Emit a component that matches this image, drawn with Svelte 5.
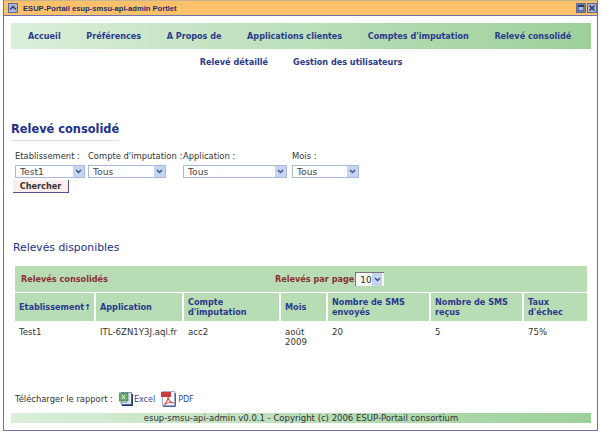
<script>
	const tabs = ['Accueil', 'Préférences', 'A Propos de', 'Applications clientes', "Comptes d'imputation", 'Relevé consolidé'];
	const filters = [
		{ label: 'Etablissement :', value: 'Test1', cls: 'f1' },
		{ label: "Compte d'imputation :", value: 'Tous', cls: 'f2' },
		{ label: 'Application :', value: 'Tous', cls: 'f3' },
		{ label: 'Mois :', value: 'Tous', cls: 'f4' }
	];
	const columns = [
		{ title: 'Etablissement↑', cls: 'c1' },
		{ title: 'Application', cls: 'c2' },
		{ title: "Compte d'imputation", cls: 'c3' },
		{ title: 'Mois', cls: 'c4' },
		{ title: 'Nombre de SMS envoyés', cls: 'c5' },
		{ title: 'Nombre de SMS reçus', cls: 'c6' },
		{ title: "Taux d'échec", cls: 'c7' }
	];
	const row = ['Test1', 'ITL-6ZN1Y3J.aql.fr', 'acc2', 'août 2009', '20', '5', '75%'];
</script>

<div class="window">
	<div class="titlebar">
		<span class="btn up">
			<svg width="8" height="8" viewBox="0 0 8 8"><path d="M1 5.5 L4 2.5 L7 5.5" fill="none" stroke="#2c3a70" stroke-width="1.4"/></svg>
		</span>
		<span class="title">ESUP-Portail esup-smsu-api-admin Portlet</span>
		<span class="spacer"></span>
		<span class="btn">
			<svg width="8" height="8" viewBox="0 0 8 8"><rect x="1" y="1" width="6" height="6" fill="none" stroke="#2c3a70"/><rect x="1" y="1" width="6" height="2" fill="#2c3a70"/></svg>
		</span>
		<span class="btn">
			<svg width="8" height="8" viewBox="0 0 8 8"><path d="M1.5 1.5 L6.5 6.5 M6.5 1.5 L1.5 6.5" stroke="#2c3a70" stroke-width="1.6"/></svg>
		</span>
	</div>

	<div class="content">
		<div class="nav">
			{#each tabs as tab}
				<span>{tab}</span>
			{/each}
		</div>
		<div class="subnav">
			<span>Relevé détaillé</span>
			<span>Gestion des utilisateurs</span>
		</div>

		<h2 class="heading">Relevé consolidé</h2>

		<div class="filters">
			{#each filters as f}
				<div class="filter {f.cls}">
					<div class="label">{f.label}</div>
					<div class="select">
						<span>{f.value}</span>
						<span class="arrow">
							<svg width="7" height="5" viewBox="0 0 7 5"><path d="M1 1 L3.5 3.5 L6 1" fill="none" stroke="#3a4f8c" stroke-width="1.4"/></svg>
						</span>
					</div>
				</div>
			{/each}
		</div>
		<button class="search">Chercher</button>

		<h3 class="subheading">Relevés disponibles</h3>

		<div class="report">
			<div class="toolbar">
				<span class="t-left">Relevés consolidés</span>
				<span class="t-right">Relevés par page</span>
				<div class="perpage">
					<span>10</span>
					<span class="arrow">
						<svg width="7" height="5" viewBox="0 0 7 5"><path d="M1 1 L3.5 3.5 L6 1" fill="none" stroke="#3a4f8c" stroke-width="1.4"/></svg>
					</span>
				</div>
			</div>
			<div class="grid">
				{#each columns as col}
					<div class="th {col.cls}">{col.title}</div>
				{/each}
				{#each row as cell, i}
					<div class="td" class:nowrap={i === 1}>{cell}</div>
				{/each}
			</div>
		</div>

		<div class="download">
			<span class="dl-label">Télécharger le rapport :</span>
			<svg class="icon excel" width="14" height="14" viewBox="0 0 14 14">
				<rect x="2.5" y="0.5" width="10" height="12" fill="#dfe6f2" stroke="#7f93bd"/>
				<rect x="0" y="1" width="9" height="8" fill="#6aa86a" stroke="#3c7a48" stroke-width="0.6"/>
				<path d="M3 3 L6 7 M6 3 L3 7" stroke="#e6f3e6" stroke-width="1"/>
				<path d="M1 10.5 H8" stroke="#9fb0cf"/>
				<path d="M3 13.2 H13.3 V2" fill="none" stroke="#1f3570" stroke-width="1.4"/>
			</svg>
			<span class="link">Excel</span>
			<svg class="icon pdf" width="15" height="16" viewBox="0 0 15 16">
				<rect x="1.5" y="0.5" width="12" height="14" fill="#fff" stroke="#a8b2cc"/>
				<rect x="0" y="1" width="10" height="5" fill="#d0383f"/>
				<path d="M7 6 C7 10 5 12 3 14 M7 6 C8 10 10 12 13 12 M3 14 C6 11 9 11 13 12" fill="none" stroke="#d8504f" stroke-width="1.1"/>
				<path d="M2 15.4 H14.4 V2" fill="none" stroke="#3a4f8c" stroke-width="1"/>
			</svg>
			<span class="link">PDF</span>
		</div>

		<div class="footer">esup-smsu-api-admin v0.0.1 - Copyright (c) 2006 ESUP-Portail consortium</div>
	</div>
</div>

<style>
	:global(body)
	{
		margin: 0;
		background: #fff;
	}

	.window
	{
		width: 595px;
		height: 431px;
		box-sizing: border-box;
		margin-left: 3px;
		border-left: 1px solid #6d6fae;
		border-right: 1px solid #6d6fae;
		border-bottom: 1px solid #6d6fae;
		font-family: "DejaVu Sans", sans-serif;
		font-size: 8.4px;
		color: #333;
	}

	.titlebar
	{
		display: flex;
		align-items: center;
		height: 14px;
		padding: 0 0 0 3px;
		background: #fdc06b;
		border-top: 1px solid #c8b48c;
		border-bottom: 1px solid #6d6fae;
	}

	.title
	{
		margin-left: 5px;
		font-family: "Liberation Sans", sans-serif;
		font-weight: bold;
		font-size: 7.6px;
		color: #23306e;
	}

	.spacer
	{
		flex: 1;
	}

	.btn
	{
		display: flex;
		align-items: center;
		justify-content: center;
		box-sizing: border-box;
		width: 10px;
		height: 10px;
		margin-left: 1px;
		background: #a9b5d3;
		border: 1px solid #5c6a96;
	}

	.content
	{
		padding: 7px 6px 0 7px;
	}

	.nav
	{
		display: flex;
		gap: 25.6px;
		align-items: center;
		height: 26px;
		padding-left: 17px;
		background: linear-gradient(to right, #daeeda, #9cd09a);
		font-weight: bold;
		font-size: 8.1px;
		color: #2a3a8c;
	}

	.subnav
	{
		display: flex;
		justify-content: center;
		gap: 25px;
		margin-top: 8px;
		font-weight: bold;
		font-size: 8.15px;
		color: #2a3a8c;
	}

	.heading
	{
		display: inline-block;
		margin: 55px 0 0;
		padding-bottom: 3px;
		border-bottom: 1px solid #dfe0f2;
		font-size: 11.4px;
		line-height: 15px;
		color: #23308a;
	}

	.filters
	{
		display: flex;
		margin: 9px 0 0 4px;
	}

	.filter
	{
		flex: none;
	}

	.f1 { width: 73px; }
	.f2 { width: 95px; }
	.f3 { width: 109px; }
	.f4 { width: 67px; }

	.label
	{
		height: 13px;
		line-height: 13px;
		white-space: nowrap;
	}

	.select
	{
		display: flex;
		justify-content: space-between;
		align-items: center;
		box-sizing: border-box;
		height: 13px;
		margin-top: 2px;
		padding-left: 4px;
		border: 1px solid #a9bbd8;
		font-size: 9.2px;
		color: #444;
	}

	.f1 .select { width: 70px; }
	.f2 .select { width: 78px; }
	.f3 .select { width: 104px; }
	.f4 .select { width: 67px; }

	.arrow
	{
		display: flex;
		align-items: center;
		justify-content: center;
		width: 11px;
		height: 100%;
		background: #c6d4f2;
	}

	.search
	{
		display: block;
		height: 13px;
		width: 56px;
		margin: 2px 0 0 2px;
		padding: 0;
		background: #fdeeee;
		border: none;
		border-bottom: 1px solid #4a5490;
		border-right: 1px solid #4a5490;
		font-family: inherit;
		font-weight: bold;
		font-size: 8.2px;
		line-height: 11px;
		color: #333;
	}

	.subheading
	{
		margin: 47px 0 0 2px;
		font-size: 10.8px;
		font-weight: normal;
		line-height: 15px;
		color: #23308a;
	}

	.report
	{
		width: 572px;
		margin: 11px 0 0 4px;
	}

	.toolbar
	{
		display: flex;
		align-items: center;
		height: 26px;
		padding-left: 6px;
		background: #b8dcb4;
		font-weight: bold;
		font-size: 8.15px;
		color: #8c2f34;
	}

	.t-left
	{
		width: 254px;
	}

	.perpage
	{
		display: flex;
		justify-content: space-between;
		align-items: center;
		box-sizing: border-box;
		width: 29px;
		height: 14px;
		margin-left: 1px;
		padding-left: 4px;
		background: #f4f8f4;
		border-top: 1px solid #777;
		border-left: 1px solid #777;
		font-weight: normal;
		font-size: 9px;
		color: #333;
	}

	.perpage .arrow
	{
		margin-right: 2px;
	}

	.grid
	{
		display: grid;
		grid-template-columns: 79px 86px 95px 45px 101px 91px 63px;
		column-gap: 2px;
		margin-top: 1px;
	}

	.th
	{
		display: flex;
		align-items: center;
		height: 28px;
		padding: 0 4px;
		background: #b8dcb4;
		font-weight: bold;
		font-size: 8.15px;
		line-height: 10px;
		color: #2a3a8c;
	}

	.c1, .c2
	{
		white-space: nowrap;
	}

	.td
	{
		padding: 6px 4px 0;
		font-size: 8.6px;
		line-height: 10px;
	}

	.nowrap
	{
		white-space: nowrap;
	}

	.download
	{
		display: flex;
		align-items: center;
		margin: 44px 0 0 4px;
		height: 16px;
	}

	.icon
	{
		flex: none;
	}

	.excel
	{
		margin-left: 6px;
	}

	.pdf
	{
		margin-left: 6px;
	}

	.link
	{
		margin-left: 2px;
		font-size: 8px;
		color: #3a4a9c;
	}

	.excel + .link
	{
		margin-left: 1px;
	}

	.footer
	{
		height: 10px;
		margin-top: 6px;
		background: linear-gradient(to right, #daeeda, #9cd09a);
		font-size: 8.5px;
		line-height: 10px;
		text-align: center;
		color: #333;
	}
</style>
